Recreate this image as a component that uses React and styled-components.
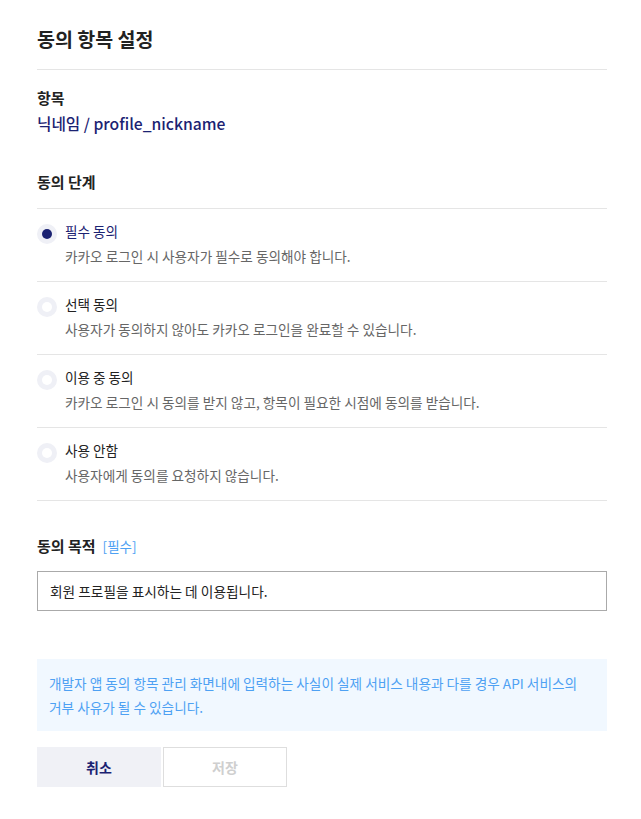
import React, { useState } from "react";
import styled, { createGlobalStyle } from "styled-components";

const Global = createGlobalStyle`
  html, body { margin: 0; padding: 0; background: #fff; }
  body { font-family: "Noto Sans CJK KR", "Noto Sans", sans-serif; color: #222; }
  * { box-sizing: border-box; }
`;

const Page = styled.div`
  padding: 25px 34px 30px 37px;
  width: 641px;
`;

const Header = styled.h1`
  margin: 0;
  font-size: 19.5px;
  line-height: 27px;
  font-weight: 700;
  color: #222;
  padding-bottom: 17px;
  border-bottom: 1px solid #e5e5e5;
`;

const Label = styled.div`
  font-size: 15px;
  line-height: 20px;
  font-weight: 700;
  color: #222;
  margin-top: ${(p) => p.$mt || 0}px;
  display: flex;
  align-items: center;
`;

const Value = styled.div`
  margin-top: 4px;
  font-size: 15.7px;
  line-height: 24px;
  font-weight: 500;
  color: #1b2272;
`;

const Required = styled.span`
  margin-left: 7px;
  font-size: 13.5px;
  font-weight: 400;
  color: #4ea1f3;
`;

const List = styled.div`
  margin-top: 16px;
  border-top: 1px solid #e5e5e5;
`;

const Row = styled.label`
  display: flex;
  gap: 8px;
  padding: 12px 0 15px;
  border-bottom: 1px solid #e5e5e5;
  cursor: pointer;
`;

const Radio = styled.span`
  flex: none;
  width: 20px;
  height: 20px;
  margin-top: 3px;
  border-radius: 50%;
  background: #eff0f6;
  display: flex;
  align-items: center;
  justify-content: center;
  &::after {
    content: "";
    width: 10px;
    height: 10px;
    border-radius: 50%;
    background: ${(p) => (p.$checked ? "#1b2272" : "#fff")};
  }
`;

const RowText = styled.div`
  display: flex;
  flex-direction: column;
  gap: 5px;
`;

const RowTitle = styled.div`
  font-size: 13.6px;
  line-height: 20px;
  font-weight: 400;
  color: ${(p) => (p.$checked ? "#1b2272" : "#222")};
`;

const RowDesc = styled.div`
  font-size: 13.65px;
  line-height: 20px;
  color: #666;
`;

const Input = styled.input`
  display: block;
  margin-top: 15px;
  width: 100%;
  height: 40px;
  border: 1px solid #aaa;
  padding: 0 12px;
  font-family: inherit;
  font-size: 13.7px;
  color: #222;
  outline: none;
`;

const Notice = styled.div`
  margin-top: 48px;
  background: #f1f8ff;
  padding: 12px 12px;
  font-size: 13.65px;
  line-height: 24px;
  color: #4ea1f3;
`;

const Buttons = styled.div`
  margin-top: 16px;
  display: flex;
  gap: 2px;
`;

const Button = styled.button`
  width: 124px;
  height: 40px;
  font-family: inherit;
  font-size: 14px;
  font-weight: 700;
  border: 1px solid ${(p) => (p.$primary ? "#f0f1f6" : "#dedede")};
  background: ${(p) => (p.$primary ? "#f0f1f6" : "#fff")};
  color: ${(p) => (p.$primary ? "#1b2272" : "#cfcfcf")};
  cursor: pointer;
`;

const options = [
  { title: "필수 동의", desc: "카카오 로그인 시 사용자가 필수로 동의해야 합니다." },
  { title: "선택 동의", desc: "사용자가 동의하지 않아도 카카오 로그인을 완료할 수 있습니다." },
  { title: "이용 중 동의", desc: "카카오 로그인 시 동의를 받지 않고, 항목이 필요한 시점에 동의를 받습니다." },
  { title: "사용 안함", desc: "사용자에게 동의를 요청하지 않습니다." },
];

export default function App() {
  const [selected, setSelected] = useState(0);
  return (
    <Page>
      <Global />
      <Header>동의 항목 설정</Header>
      <Label $mt={18}>항목</Label>
      <Value>닉네임 / profile_nickname</Value>
      <Label $mt={36}>동의 단계</Label>
      <List>
        {options.map((o, i) => (
          <Row key={o.title} onClick={() => setSelected(i)}>
            <Radio $checked={selected === i} />
            <RowText>
              <RowTitle $checked={selected === i}>{o.title}</RowTitle>
              <RowDesc>{o.desc}</RowDesc>
            </RowText>
          </Row>
        ))}
      </List>
      <Label $mt={35}>
        동의 목적<Required>[필수]</Required>
      </Label>
      <Input defaultValue="회원 프로필을 표시하는 데 이용됩니다." />
      <Notice>
        개발자 앱 동의 항목 관리 화면내에 입력하는 사실이 실제 서비스 내용과 다를 경우 API 서비스의
        <br />
        거부 사유가 될 수 있습니다.
      </Notice>
      <Buttons>
        <Button $primary>취소</Button>
        <Button disabled>저장</Button>
      </Buttons>
    </Page>
  );
}
